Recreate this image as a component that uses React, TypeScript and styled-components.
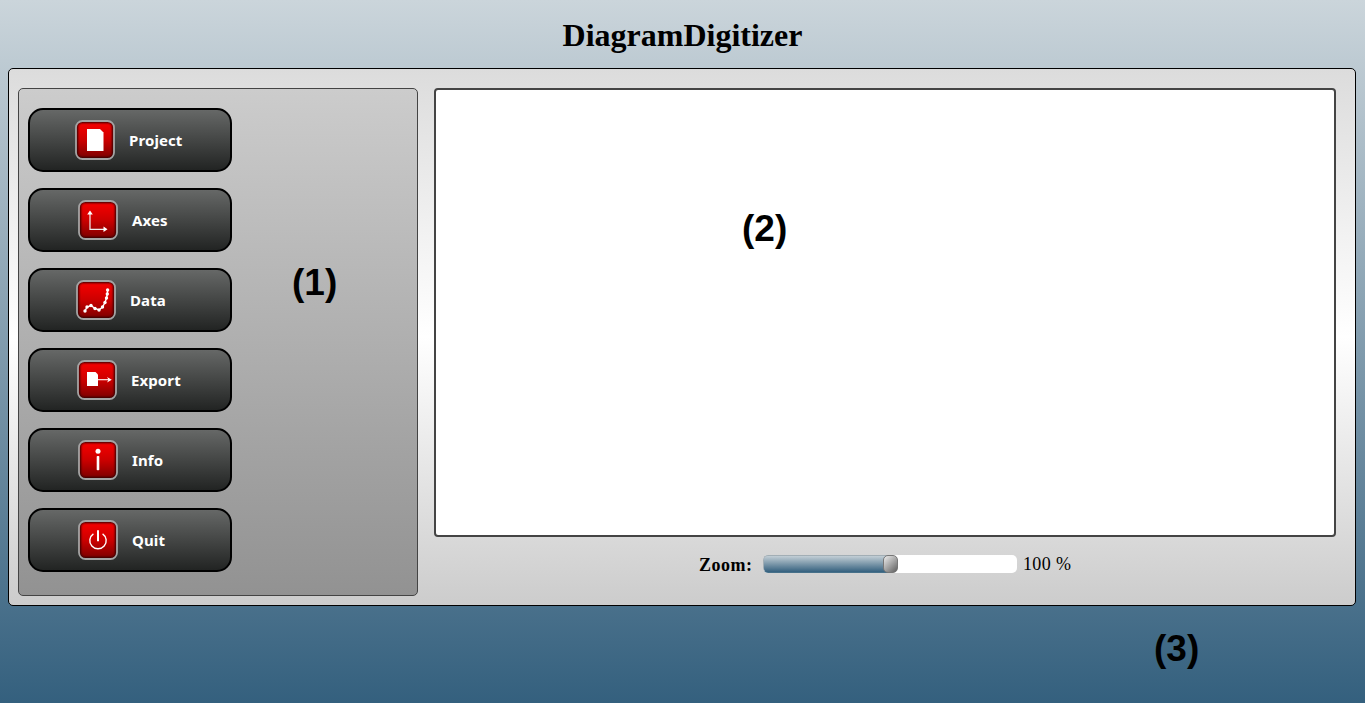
import React from "react";
import styled, { createGlobalStyle } from "styled-components";

const GlobalStyle = createGlobalStyle`
  * { box-sizing: border-box; }
  body {
    margin: 0;
    height: 703px;
    overflow: hidden;
    background: linear-gradient(to bottom, #cbd5db 0%, #34607e 100%);
    font-family: "Liberation Serif", "Times New Roman", serif;
    color: #000;
  }
`;

const Page = styled.div`
  position: relative;
  display: flex;
  flex-direction: column;
  height: 703px;
  padding: 0 9px 0 8px;
`;

const Title = styled.h1`
  margin: 0;
  height: 68px;
  padding: 17px 0 0 1px;
  font-size: 32px;
  line-height: 37px;
  text-align: center;
`;

const Workspace = styled.main`
  display: flex;
  height: 538px;
  gap: 16px;
  padding: 19px 19px 9px 9px;
  border: 1px solid #000;
  border-radius: 5px;
  background: linear-gradient(to bottom, #dcdcdc 0%, #fff 50%, #ccc 100%);
`;

const Menu = styled.nav`
  display: flex;
  flex-direction: column;
  gap: 16px;
  width: 400px;
  height: 508px;
  padding: 19px 9px;
  border: 1px solid #444;
  border-radius: 5px;
  background: linear-gradient(to bottom, #ccc, #929292);
`;

const MenuButton = styled.button`
  display: flex;
  align-items: center;
  justify-content: center;
  gap: 14px;
  width: 204px;
  height: 64px;
  padding: 0;
  border: 2px solid #000;
  border-radius: 15px;
  background: linear-gradient(to bottom, #666867, #222423);
  color: #fff;
  font: bold 15px/20px "Noto Sans", sans-serif;
`;

const Label = styled.span<{ $width: number }>`
  width: ${(p) => p.$width}px;
  letter-spacing: 0.1px;
  text-align: left;
  white-space: nowrap;
`;

const IconSvg = styled.svg`
  display: block;
  flex: none;
`;

const Content = styled.section`
  display: flex;
  flex-direction: column;
  align-items: center;
  width: 902px;
`;

const Canvas = styled.div`
  width: 902px;
  height: 449px;
  border: 2px solid #444;
  border-radius: 4px;
  background: #fff;
`;

const ZoomRow = styled.div`
  display: flex;
  align-items: center;
  height: 18px;
  margin-top: 18px;
  font-size: 18px;
  line-height: 20px;
`;

const ZoomLabel = styled.span`
  width: 64px;
  padding-top: 2px;
  font-weight: bold;
  letter-spacing: 0.5px;
`;

const Track = styled.div`
  display: flex;
  width: 254px;
  height: 18px;
  border-radius: 5px;
  background: #fff;
`;

const Fill = styled.div`
  width: 125px;
  border: 1px solid #a2aeb5;
  border-bottom-color: #467089;
  border-right: 0;
  border-radius: 5px 0 0 5px;
  background: linear-gradient(to bottom, #c2ced5, #34607e);
`;

const Thumb = styled.div`
  width: 15px;
  margin-left: -5px;
  border: 1px solid #777;
  border-radius: 5px;
  background: linear-gradient(135deg, #e0e0e0 10%, #666 95%);
`;

const ZoomValue = styled.span`
  width: 54px;
  padding-left: 6px;
  letter-spacing: 0.35px;
  white-space: nowrap;
`;

const Marker = styled.span<{ $x: number; $y: number }>`
  position: absolute;
  left: ${(p) => p.$x}px;
  top: ${(p) => p.$y}px;
  font: bold 37px/44px "Liberation Sans", Arial, sans-serif;
`;

function Tile({ id, children }: { id: string; children: React.ReactNode }) {
  return (
    <IconSvg width="40" height="40" viewBox="0 0 40 40">
      <defs>
        <linearGradient id={`red-${id}`} x1="0" y1="0" x2="0" y2="1">
          <stop offset="0" stopColor="#fa0000" />
          <stop offset="0.5" stopColor="#cc0000" />
          <stop offset="1" stopColor="#780000" />
        </linearGradient>
        <filter id={`soft-${id}`} x="-10%" y="-10%" width="120%" height="120%">
          <feGaussianBlur stdDeviation="0.9" />
        </filter>
        <clipPath id={`clip-${id}`}>
          <rect x="1.5" y="1.5" width="37" height="37" rx="5.5" />
        </clipPath>
      </defs>
      <rect x="1" y="1" width="38" height="38" rx="6" fill={`url(#red-${id})`} />
      <g clipPath={`url(#clip-${id})`}>
        <rect x="1.5" y="1.5" width="37" height="37" rx="5.5" fill="none" stroke="#300" strokeWidth="3" filter={`url(#soft-${id})`} />
      </g>
      <rect x="1" y="1" width="38" height="38" rx="6.5" fill="none" stroke="#a4a4a4" strokeWidth="1.8" />
      {children}
    </IconSvg>
  );
}

const dots = [
  [9, 31], [11, 27], [15, 25.5], [19, 28.5], [23, 30], [26.5, 27], [29, 22.5], [30.5, 18], [31.3, 14], [31.6, 10],
];

const glyphs: Record<string, React.ReactNode> = {
  Project: <path d="M12 9H25L28.5 12.5V31H12Z" fill="#fff" />,
  Axes: (
    <g fill="#fff">
      <path d="M12 13V29.3H27" fill="none" stroke="#eee" strokeWidth="1.2" />
      <path d="M12 10.5L14.8 14.5H9.2ZM29.5 29.3L25.5 26.5V32.1Z" />
    </g>
  ),
  Data: (
    <g fill="#fff">
      <polyline points={dots.map((p) => p.join(",")).join(" ")} fill="none" stroke="#fff" strokeWidth="1.4" />
      {dots.map(([x, y]) => <circle key={y} cx={x} cy={y} r="1.7" />)}
    </g>
  ),
  Export: (
    <g fill="#fff">
      <path d="M10 12H18.5L21 14.5V26H10Z" />
      <path d="M21 19.7H32" stroke="#fff" strokeWidth="1.1" />
      <path d="M34.8 19.7L30 17L31.5 19.7L30 22.4Z" />
    </g>
  ),
  Info: (
    <g fill="#fff">
      <circle cx="20" cy="11.3" r="2.5" />
      <rect x="18.7" y="16" width="2.6" height="14.3" rx="0.8" />
    </g>
  ),
  Quit: (
    <g fill="none" stroke="#fff">
      <path d="M15.4 13.8A8.2 8.2 0 1 0 24.6 13.8" strokeWidth="1.4" />
      <path d="M20 10.3V21.2" strokeWidth="2" />
    </g>
  ),
};

const items: [string, number][] = [
  ["Project", 56], ["Axes", 50], ["Data", 54], ["Export", 52], ["Info", 50], ["Quit", 50],
];

export default function App() {
  return (
    <>
      <GlobalStyle />
      <Page>
        <Title>DiagramDigitizer</Title>
        <Workspace>
          <Menu>
            {items.map(([name, width]) => (
              <MenuButton key={name}>
                <Tile id={name}>{glyphs[name]}</Tile>
                <Label $width={width}>{name}</Label>
              </MenuButton>
            ))}
          </Menu>
          <Content>
            <Canvas />
            <ZoomRow>
              <ZoomLabel>Zoom:</ZoomLabel>
              <Track>
                <Fill />
                <Thumb />
              </Track>
              <ZoomValue>100 %</ZoomValue>
            </ZoomRow>
          </Content>
        </Workspace>
        <Marker $x={292} $y={261}>(1)</Marker>
        <Marker $x={742} $y={207}>(2)</Marker>
        <Marker $x={1154} $y={627}>(3)</Marker>
      </Page>
    </>
  );
}
